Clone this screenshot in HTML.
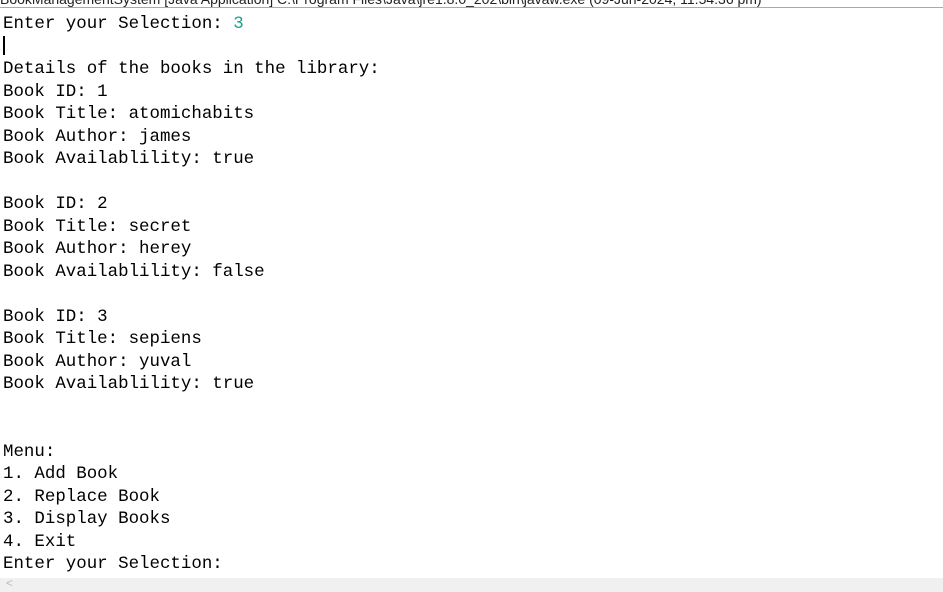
<!DOCTYPE html>
<html><head><style>
body{margin:0;width:943px;height:592px;overflow:hidden;background:#fff;position:relative;font-family:"Liberation Mono",monospace;}
.hdr{position:absolute;top:-9px;left:0;font-family:"Liberation Sans",sans-serif;font-size:14px;color:#222;white-space:nowrap;}
.bar{position:absolute;top:7px;left:0;width:943px;height:1px;background:#aaa;}
pre{position:absolute;top:13px;left:3px;margin:0;font-family:"Liberation Mono",monospace;font-size:17.45px;line-height:22.5px;color:#000;}
.g{color:#17a589;}
.cur{display:inline-block;width:1.5px;height:19px;background:#000;vertical-align:middle;}
.sb{position:absolute;left:0;top:578px;width:943px;height:14px;background:#f0f0f0;}
.sb span{position:absolute;left:6px;top:-2px;color:#bbb;font-size:12px;font-family:"Liberation Sans",sans-serif;}
</style></head><body>
<div class="hdr">BookManagementSystem [Java Application] C:\Program Files\Java\jre1.8.0_202\bin\javaw.exe (09-Jun-2024, 11:54:36 pm)</div>
<div class="bar"></div>
<pre>Enter your Selection: <span class="g">3</span>
<span class="cur"></span>
Details of the books in the library:
Book ID: 1
Book Title: atomichabits
Book Author: james
Book Availablility: true

Book ID: 2
Book Title: secret
Book Author: herey
Book Availablility: false

Book ID: 3
Book Title: sepiens
Book Author: yuval
Book Availablility: true


Menu:
1. Add Book
2. Replace Book
3. Display Books
4. Exit
Enter your Selection: </pre>
<div class="sb"><span>&lt;</span></div>
</body></html>
